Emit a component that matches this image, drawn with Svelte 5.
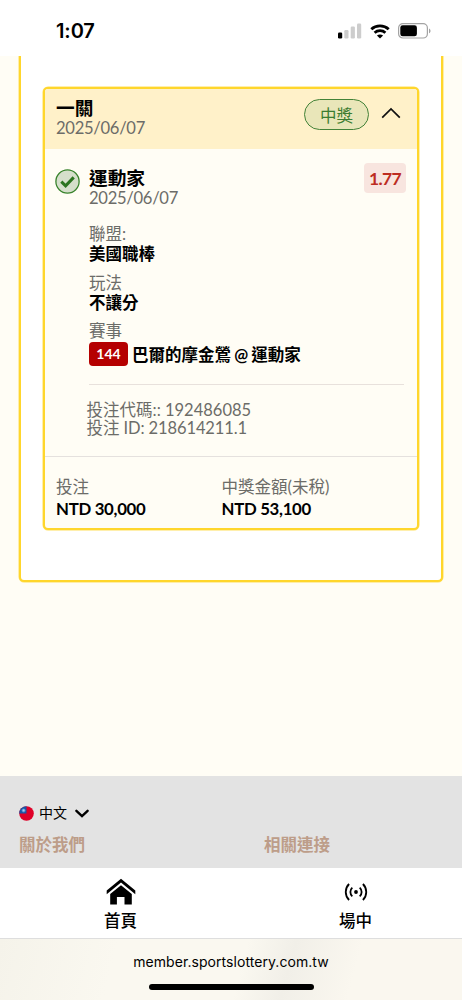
<script lang="ts">
  const details = [
    { label: '聯盟:', value: '美國職棒' },
    { label: '玩法', value: '不讓分' },
  ];

  const totals = [
    { label: '投注', value: 'NTD 30,000' },
    { label: '中獎金額(未稅)', value: 'NTD 53,100' },
  ];
</script>

<div class="screen">
  <header class="status-bar">
    <span class="time">1:07</span>
    <div class="status-icons">
      <svg class="signal" viewBox="0 0 24 16">
        <rect x="0" y="9.5" width="4.2" height="6" rx="1.2" />
        <rect class="dim" x="6.3" y="7" width="4.2" height="8.5" rx="1.2" />
        <rect class="dim" x="12.7" y="3.5" width="4.2" height="12" rx="1.2" />
        <rect class="dim" x="19" y="0.5" width="4.2" height="15" rx="1.2" />
      </svg>
      <svg class="wifi" viewBox="0 0 20 15">
        <path d="M1.3 5.3C6.1.8 13.9.8 18.7 5.3" />
        <path d="M4.6 8.8c3-2.8 7.8-2.8 10.8 0" />
        <path class="dot" d="M10 14.6 6.9 11.6c1.7-1.6 4.5-1.6 6.2 0z" />
      </svg>
      <svg class="battery" viewBox="0 0 33 16">
        <rect class="shell" x="0.6" y="0.6" width="28.8" height="14.4" rx="4.3" />
        <rect x="2.3" y="2.3" width="16.6" height="11" rx="2.4" />
        <path class="cap" d="M31 5.4c2 .8 2 4 0 4.8z" />
      </svg>
    </div>
  </header>

  <main class="content">
    <section class="panel">
      <article class="ticket">
        <div class="ticket-header">
          <div>
            <div class="title">一關</div>
            <div class="date">2025/06/07</div>
          </div>
          <div class="header-side">
            <span class="status">中獎</span>
            <svg class="chevron-up" viewBox="0 0 20 12"><path d="M1.2 10.7 10 2l8.8 8.7" /></svg>
          </div>
        </div>

        <div class="selection">
          <svg class="check" viewBox="0 0 25 25">
            <circle cx="12.5" cy="12.5" r="11.6" />
            <path d="m6.3 12.6 4.3 4.2 8.1-8.4" />
          </svg>
          <div class="selection-body">
            <div class="selection-top">
              <div>
                <div class="title">運動家</div>
                <div class="date">2025/06/07</div>
              </div>
              <span class="odds">1.77</span>
            </div>

            {#each details as detail}
              <div class="detail">
                <div class="label">{detail.label}</div>
                <div class="value">{detail.value}</div>
              </div>
            {/each}
            <div class="detail">
              <div class="label">賽事</div>
              <div class="match"><span class="code">144</span><span class="value">巴爾的摩金鶯 @ 運動家</span></div>
            </div>

            <div class="ids">
              <div>投注代碼:: 192486085</div>
              <div>投注 ID: 218614211.1</div>
            </div>
          </div>
        </div>

        <div class="totals">
          {#each totals as total}
            <div>
              <div class="total-label">{total.label}</div>
              <div class="amount">{total.value}</div>
            </div>
          {/each}
        </div>
      </article>
    </section>
  </main>

  <footer class="footer">
    <div class="language">
      <svg class="flag" viewBox="0 0 15 15">
        <circle class="red" cx="7.5" cy="7.5" r="7.3" />
        <path class="blue" d="M.2 7.5A7.3 7.3 0 0 1 7.5.2v7.3z" />
        <circle class="halo" cx="4.6" cy="4.4" r="2" />
        <circle class="sun" cx="4.6" cy="4.4" r="1.1" />
      </svg>
      <span>中文</span>
      <svg class="chevron-down" viewBox="0 0 14 9"><path d="m1.4 1.8 5.6 5.3 5.6-5.3" /></svg>
    </div>
    <div class="links">
      <span>關於我們</span>
      <span>相關連接</span>
    </div>
  </footer>

  <nav class="tabs">
    <div class="tab home">
      <svg viewBox="0 0 30 28">
        <path d="M15 .7.7 12.6v3.7L15 4.5l14.3 11.8v-3.7z" />
        <path d="M15 7.2 4.2 16.1v10.4h6.7v-7.4h7.6v7.4h7.3V16.1z" />
      </svg>
      <span>首頁</span>
    </div>
    <div class="tab live">
      <svg viewBox="0 0 24 20">
        <circle cx="12" cy="10" r="1.9" />
        <path d="M8.3 5.6a6 6 0 0 0 0 8.8M15.7 5.6a6 6 0 0 1 0 8.8" />
        <path d="M5.1 2a11.2 11.2 0 0 0 0 16M18.9 2a11.2 11.2 0 0 1 0 16" />
      </svg>
      <span>場中</span>
    </div>
  </nav>

  <div class="browser-bar">
    <span>member.sportslottery.com.tw</span>
    <div class="home-indicator"></div>
  </div>
</div>

<style>
  :global(body) {
    background: #fffdf5;
  }

  .screen {
    display: flex;
    flex-direction: column;
    height: 1000px;
    width: 462px;
    overflow: hidden;
    font-family: Lato, 'Noto Sans CJK TC', sans-serif;
    color: #000;
    white-space: nowrap;
  }

  .screen * {
    box-sizing: border-box;
  }

  svg {
    display: block;
    flex: none;
  }

  .status-bar {
    display: flex;
    flex: none;
    justify-content: space-between;
    align-items: flex-start;
    height: 56px;
    padding: 19px 31px 0 56px;
    background: #fff;
  }

  .time {
    font: 600 20px/24px Inter, sans-serif;
    letter-spacing: -0.1px;
  }

  .status-icons {
    display: flex;
    align-items: center;
    padding-top: 4px;
  }

  .signal {
    width: 24px;
    height: 16px;
    margin-right: 8px;
  }

  .dim {
    fill: #cdcdcd;
  }

  .wifi {
    width: 20px;
    height: 15px;
    margin-right: 8px;
    fill: none;
    stroke: #000;
    stroke-width: 2.8;
  }

  .wifi .dot {
    fill: #000;
    stroke: none;
  }

  .battery {
    width: 33px;
    height: 16px;
  }

  .shell {
    fill: none;
    stroke: #a3a3a3;
    stroke-width: 1.2;
  }

  .cap {
    fill: #a3a3a3;
  }

  .content {
    height: 720px;
    padding: 0 19px;
    overflow: hidden;
    background: #fffdf5;
  }

  .panel {
    height: 526px;
    padding: 31px 22px 0;
    background: #fff;
    border: 2px solid #ffd62c;
    border-top: 0;
    border-radius: 0 0 5px 5px;
    box-shadow: 0 0 0 0.5px #ffdf5b;
  }

  .ticket {
    height: 443px;
    overflow: hidden;
    background: #fffdf5;
    border: 2px solid #ffd62c;
    border-radius: 5px;
    box-shadow: 0 0 0 0.5px #ffdf5b;
  }

  .ticket-header {
    display: flex;
    justify-content: space-between;
    height: 60px;
    padding: 9px 16px 0 11px;
    background: #fff1c9;
  }

  .title {
    font-size: 18.7px;
    font-weight: 700;
    line-height: 20px;
  }

  .date {
    font-size: 16.6px;
    line-height: 20px;
    letter-spacing: -0.3px;
    color: #6c6c68;
  }

  .header-side {
    display: flex;
    align-items: flex-start;
    gap: 12px;
    padding-top: 1px;
  }

  .status {
    width: 65px;
    height: 31px;
    border: 1px solid #438238;
    border-radius: 16px;
    background: #e9e6b9;
    color: #3c7d31;
    font-size: 16.5px;
    line-height: 32px;
    text-align: center;
  }

  .chevron-up {
    width: 20px;
    height: 12px;
    margin-top: 8px;
    fill: none;
    stroke: #111;
    stroke-width: 1.7;
  }

  .selection {
    display: flex;
    height: 307px;
    padding: 15px 13px 0 10px;
  }

  .check {
    width: 25px;
    height: 25px;
    margin: 5px 9px 0 0;
    fill: #d5dfcb;
    stroke: #38832c;
    stroke-width: 1.3;
  }

  .check path {
    fill: none;
    stroke: #2b7420;
    stroke-width: 3;
  }

  .selection-body {
    flex: 1;
  }

  .selection-top {
    display: flex;
    justify-content: space-between;
    height: 60px;
    padding-top: 4px;
    margin-right: -2px;
  }

  .odds {
    width: 42px;
    height: 30px;
    margin-top: -5px;
    border-radius: 4px;
    background: #f8e5df;
    color: #bd2c22;
    font-size: 17.5px;
    font-weight: 700;
    line-height: 31px;
    letter-spacing: -0.6px;
    text-align: center;
  }

  .detail {
    height: 48.7px;
  }

  .label,
  .value {
    font-size: 16.5px;
    line-height: 20px;
  }

  .label {
    color: #6c6c68;
  }

  .value {
    font-weight: 700;
  }

  .match {
    display: flex;
    align-items: center;
    gap: 4px;
    height: 24px;
    margin-top: 1px;
  }

  .match .value {
    padding-top: 1px;
    word-spacing: -0.8px;
  }

  .code {
    width: 39px;
    height: 24px;
    border-radius: 4px;
    background: #b50000;
    color: #fff;
    font-size: 14px;
    font-weight: 700;
    line-height: 24px;
    text-align: center;
  }

  .ids {
    margin-top: 14px;
    padding-top: 16px;
    border-top: 1px solid #e8e1dc;
    font-size: 16.5px;
    line-height: 18px;
    color: #6c6c68;
  }

  .ids div {
    margin-left: -2.5px;
  }

  .ids div + div {
    letter-spacing: -0.1px;
  }

  .totals {
    display: grid;
    grid-template-columns: 165.5px 1fr;
    padding: 19px 11px 0;
    border-top: 1px solid #e5e1de;
  }

  .total-label {
    font-size: 16.5px;
    line-height: 22px;
    color: #6c6c68;
  }

  .amount {
    font-size: 16.8px;
    font-weight: 700;
    line-height: 22px;
    letter-spacing: -0.3px;
  }

  .footer {
    height: 92px;
    padding: 27px 19px 0;
    background: #e3e3e3;
  }

  .language {
    display: flex;
    align-items: center;
    height: 20px;
    font-size: 14px;
  }

  .language span {
    padding-bottom: 2px;
  }

  .flag {
    width: 15px;
    height: 15px;
    margin-right: 5px;
  }

  .red {
    fill: #df0028;
  }

  .blue {
    fill: #1755a5;
  }

  .halo {
    fill: #4c86ca;
  }

  .sun {
    fill: #a5cbef;
  }

  .chevron-down {
    width: 14px;
    height: 9px;
    margin-left: 8px;
    fill: none;
    stroke: #000;
    stroke-width: 2.4;
    stroke-linecap: round;
  }

  .links {
    display: grid;
    grid-template-columns: 245px 1fr;
    margin-top: 12px;
    color: #bd9d89;
    font-size: 16.5px;
    font-weight: 700;
    line-height: 20px;
  }

  .tabs {
    display: flex;
    height: 71px;
    padding: 0 3px;
    background: #fff;
    border-bottom: 1px solid #dedede;
  }

  .tab {
    display: flex;
    flex: 0 0 235px;
    flex-direction: column;
    align-items: center;
    font-size: 16.5px;
    font-weight: 500;
    line-height: 22px;
  }

  .home svg {
    width: 30px;
    height: 28px;
    margin: 10px 0 4px;
  }

  .live svg {
    width: 24px;
    height: 20px;
    margin: 14px 0 8px;
  }

  .live path {
    fill: none;
    stroke: #000;
    stroke-width: 1.8;
  }

  .browser-bar {
    display: flex;
    flex: 1;
    flex-direction: column;
    align-items: center;
    padding-top: 13px;
    background: linear-gradient(105deg, #f5f3ea, #faf8f0 25%, #faf8f0 52%, #f1efe8 62%, #faf7ef 76%, #faf7ef);
    font: 14px/20px Inter, sans-serif;
    letter-spacing: 0.06px;
  }

  .home-indicator {
    width: 165px;
    height: 6px;
    margin-top: 12px;
    border-radius: 3px;
    background: #000;
  }
</style>
